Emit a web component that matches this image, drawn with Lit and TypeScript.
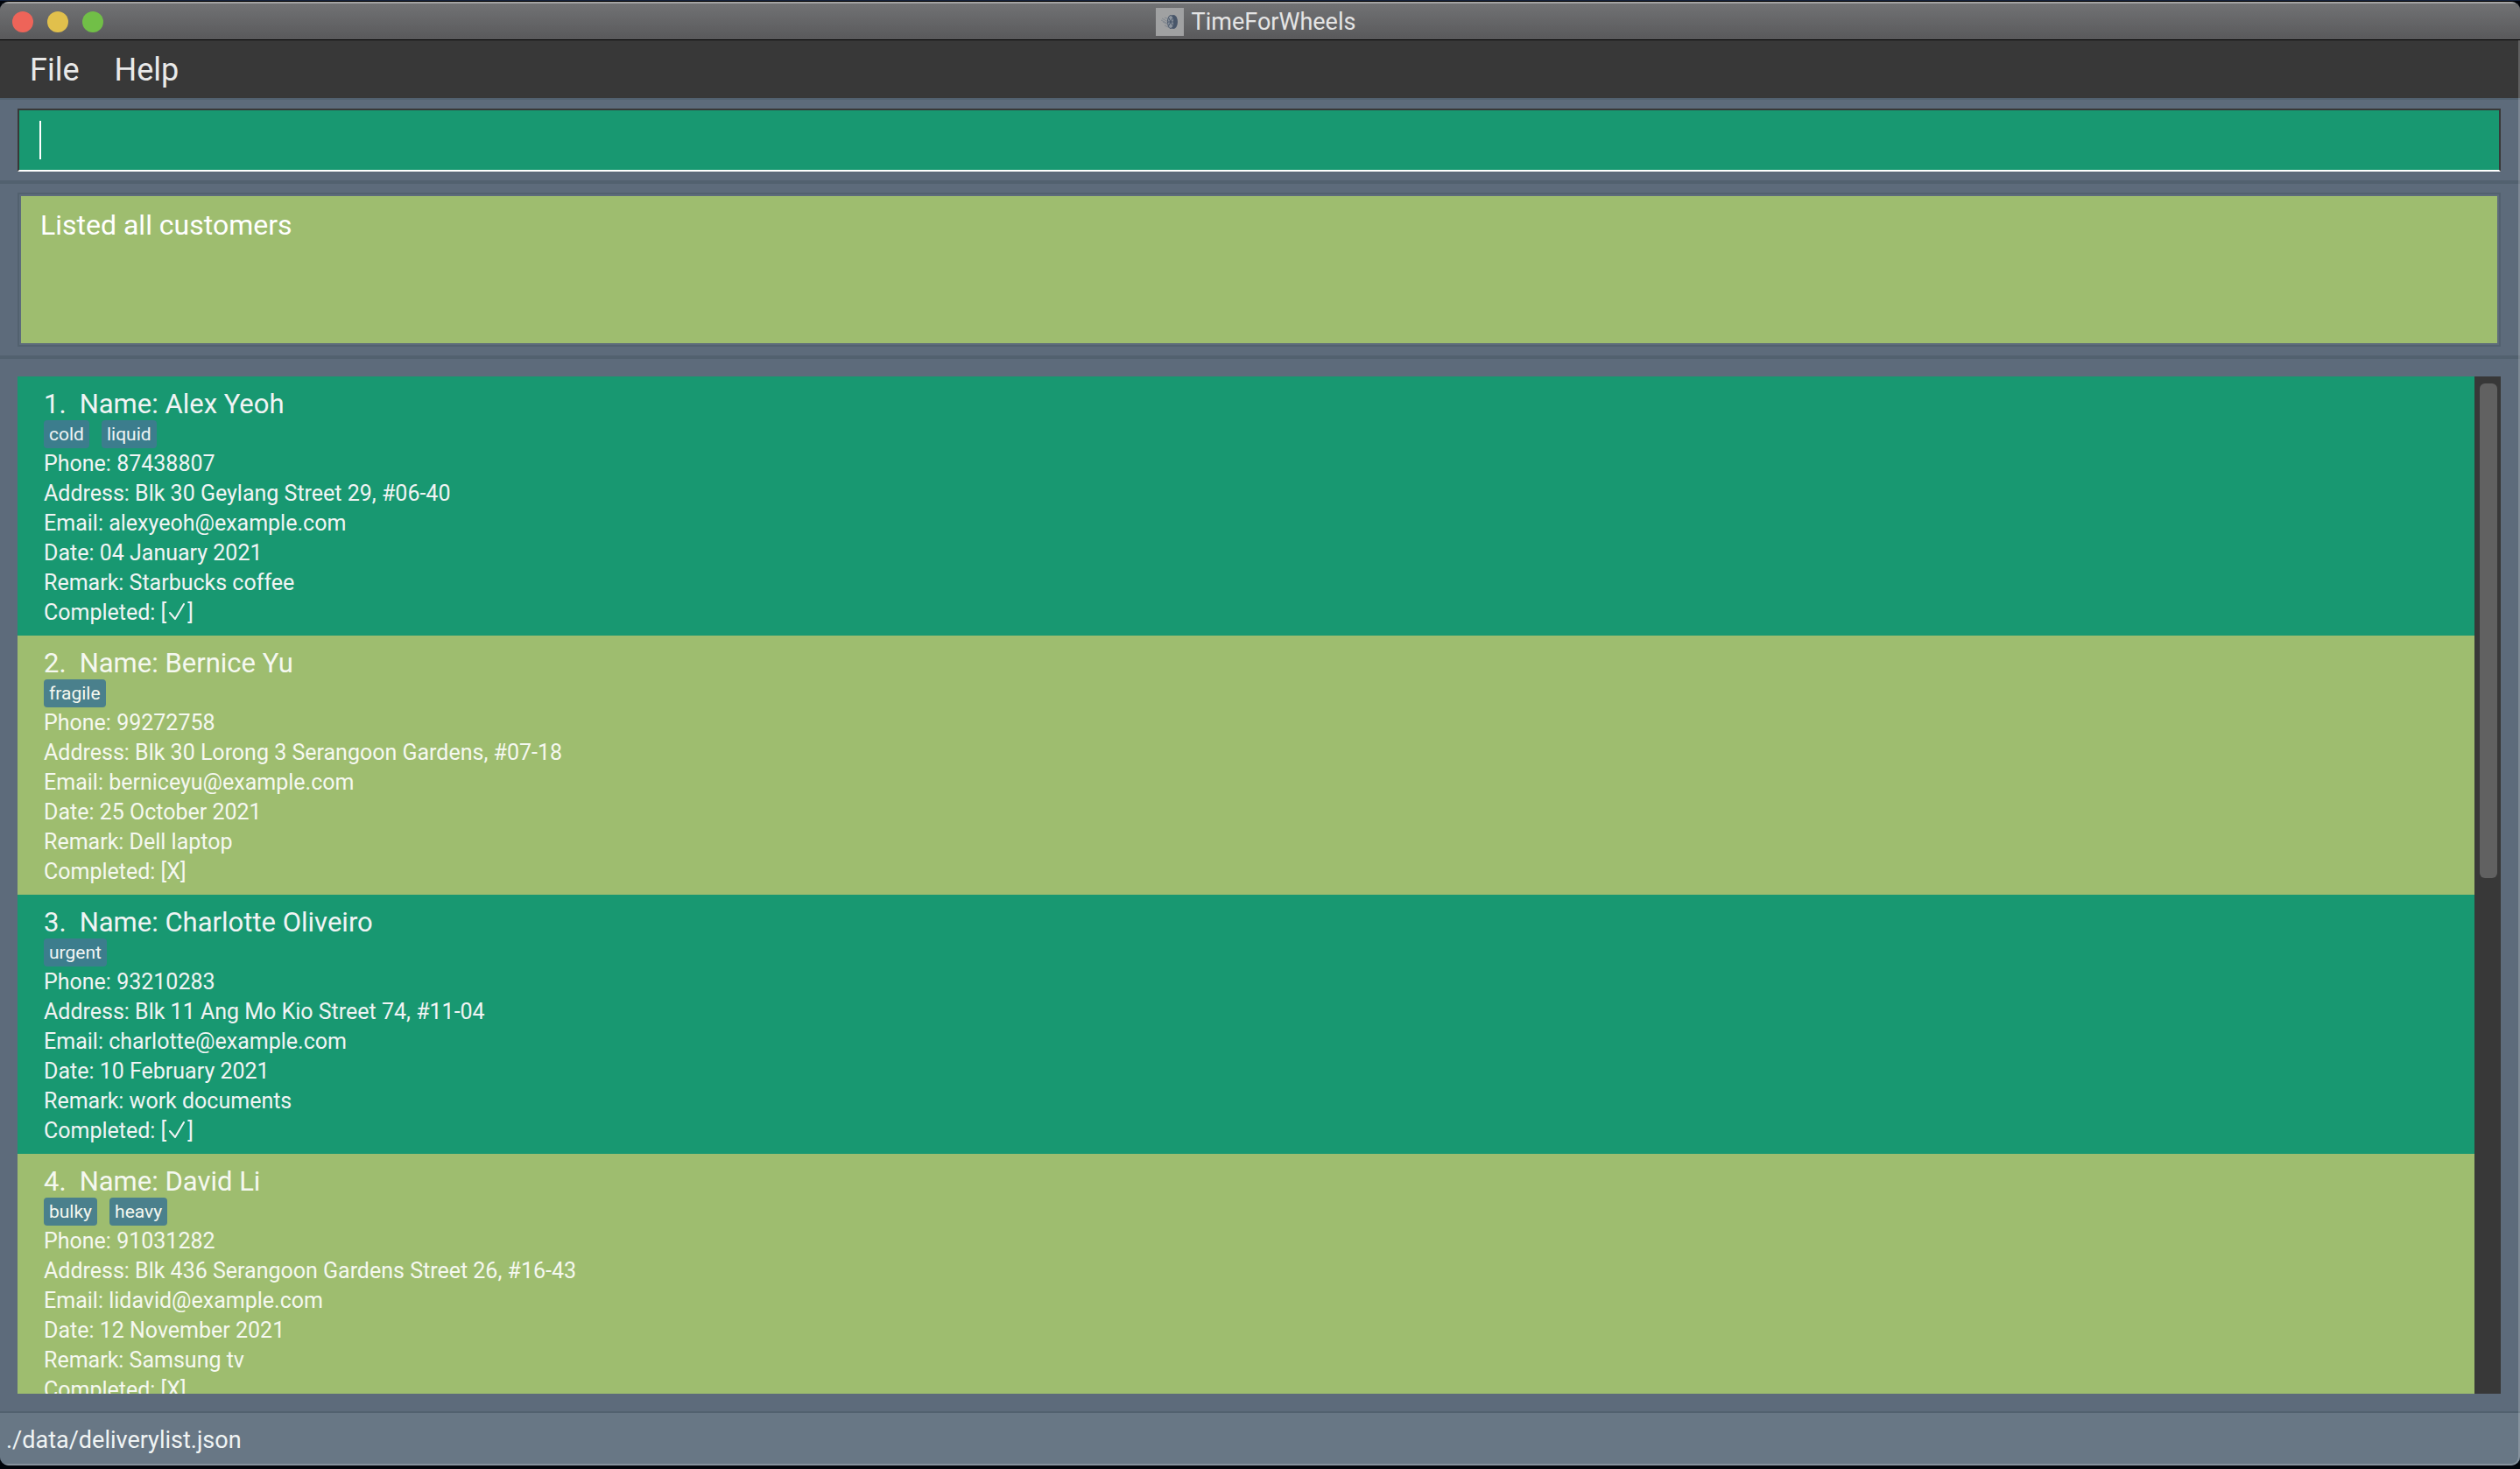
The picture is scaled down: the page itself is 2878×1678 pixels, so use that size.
import { LitElement, html, css } from "lit";
import { customElement } from "lit/decorators.js";

interface Customer {
  name: string;
  tags: string[];
  phone: string;
  address: string;
  email: string;
  date: string;
  remark: string;
  completed: boolean;
}

const customers: Customer[] = [
  { name: "Alex Yeoh", tags: ["cold", "liquid"], phone: "87438807", address: "Blk 30 Geylang Street 29, #06-40", email: "alexyeoh@example.com", date: "04 January 2021", remark: "Starbucks coffee", completed: true },
  { name: "Bernice Yu", tags: ["fragile"], phone: "99272758", address: "Blk 30 Lorong 3 Serangoon Gardens, #07-18", email: "berniceyu@example.com", date: "25 October 2021", remark: "Dell laptop", completed: false },
  { name: "Charlotte Oliveiro", tags: ["urgent"], phone: "93210283", address: "Blk 11 Ang Mo Kio Street 74, #11-04", email: "charlotte@example.com", date: "10 February 2021", remark: "work documents", completed: true },
  { name: "David Li", tags: ["bulky", "heavy"], phone: "91031282", address: "Blk 436 Serangoon Gardens Street 26, #16-43", email: "lidavid@example.com", date: "12 November 2021", remark: "Samsung tv", completed: false },
];

@customElement("customer-card")
class CustomerCard extends LitElement {
  static properties = { customer: { attribute: false }, index: { type: Number } };
  declare customer: Customer;
  declare index: number;

  static styles = css`
    :host { display: block; padding: 10px 30px 9px; }
    .name { margin: 0; height: 40px; font-size: 31px; font-weight: 400; line-height: 43px; display: flex; gap: 15px; }
    .tags { display: flex; gap: 14px; height: 32px; margin-bottom: 1px; }
    .tag { background: rgb(60, 125, 141); border-radius: 4px; padding: 0 6px; font-size: 21px; line-height: 32px; }
    :host(.alt) .tag { background: rgb(74, 128, 140); }
    .line { margin: 0; font-size: 25px; line-height: 34px; }
    .tick { width: 20px; height: 20px; margin: 0 2px; vertical-align: -1px; }
  `;

  render() {
    const c = this.customer;
    return html`
      <h2 class="name"><span>${this.index}.</span><span>Name: ${c.name}</span></h2>
      <div class="tags">${c.tags.map((t) => html`<span class="tag">${t}</span>`)}</div>
      <p class="line">Phone: ${c.phone}</p>
      <p class="line">Address: ${c.address}</p>
      <p class="line">Email: ${c.email}</p>
      <p class="line">Date: ${c.date}</p>
      <p class="line">Remark: ${c.remark}</p>
      <p class="line">Completed: [${c.completed
        ? html`<svg class="tick" viewBox="0 0 20 20" role="img" aria-label="yes"><path d="M2 11 L8 18 L18 1" fill="none" stroke="currentColor" stroke-width="2" stroke-linecap="round" stroke-linejoin="round" /></svg>`
        : "X"}]</p>
    `;
  }
}

@customElement("app-root")
export class AppRoot extends LitElement {
  static styles = css`
    * { box-sizing: border-box; }
    :host { display: block; background: #02050c; color: #f0f4f4; font-family: Roboto, "Liberation Sans", sans-serif; }
    .screen { height: 100vh; display: flex; flex-direction: column; padding: 1px 0 4px; background: linear-gradient(#14223c 0 1px, #02050c 1px); }
    .window { flex: 1; min-height: 0; display: flex; flex-direction: column; overflow: hidden; background: #5d6b7b; border-radius: 10px; border-top: 1px solid #000; position: relative; }
    .window::after { content: ""; position: absolute; inset: 44px 0 0; border: solid rgba(255, 255, 255, 0.2); border-width: 0 2px 2px 0; border-radius: 0 0 10px 0; pointer-events: none; }
    .titlebar { flex: none; height: 44px; border-top: 2px solid #a4a4a4; border-bottom: 1px solid #000; background: linear-gradient(#717274, #59595b); display: grid; grid-template-columns: 1fr auto 1fr; align-items: center; }
    .lights { display: flex; gap: 16px; padding-left: 14px; }
    .light { appearance: none; border: 0; padding: 0; width: 24px; height: 24px; border-radius: 50%; }
    .close { background: #ee6459; }
    .minimise { background: #e1c04c; }
    .zoom { background: #71bf47; }
    .title { display: flex; align-items: center; gap: 9px; margin: 0; font-size: 27px; font-weight: 400; line-height: 30px; color: #e4e4e4; padding-right: 10px; }
    .logo { width: 32px; height: 32px; display: block; }
    .menubar { flex: none; height: 66px; background: #383838; display: flex; align-items: center; gap: 40px; padding: 2px 34px 0; }
    .menu { appearance: none; background: none; border: 0; padding: 0; font: inherit; font-size: 36px; line-height: 44px; color: #e9e9e9; }
    .command { flex: none; padding: 10px 22px 10px 20px; border-top: 2px solid #52616f; }
    .field { display: block; width: 100%; height: 72px; background: #189871; border: 2px solid #383838; border-bottom-color: #fff; border-radius: 0; outline: 0; padding: 0 23px; font: inherit; font-size: 32px; color: #fff; caret-color: transparent; background-image: linear-gradient(#fff, #fff); background-size: 2px 44px; background-repeat: no-repeat; background-position: 23px 12px; }
    .result { flex: none; border-top: 4px solid #52616f; border-bottom: 4px solid #52616f; padding: 10px 22px 10px 20px; }
    .frame { border: 2px solid #52616f; padding: 2px; }
    .message { display: block; width: 100%; height: 168px; margin: 0; border: 0; outline: 0; resize: none; padding: 11px 22px; background: #9ebd6f; color: #fff; font: inherit; font-size: 32px; line-height: 44px; }
    .listwrap { flex: 1; min-height: 0; margin: 20px 22px 20px 20px; display: flex; }
    .list { flex: 1; overflow: hidden; list-style: none; margin: 0; padding: 0; }
    .row { background: #189871; }
    .row:nth-child(even) { background: #9ebd6f; color: #f5f8f0; }
    .track { flex: none; width: 30px; background: #383838; padding: 8px 4px 0 6px; }
    .thumb { height: 49%; background: #616161; border-radius: 6px; }
    .status { flex: none; height: 62px; border-top: 2px solid #52616f; background: #687785; padding: 2px 7px 0; display: flex; align-items: center; font-size: 27px; line-height: 36px; }
  `;

  render() {
    return html`
      <div class="screen">
        <main class="window">
          <header class="titlebar">
            <div class="lights">
              <button class="light close" aria-label="Close"></button>
              <button class="light minimise" aria-label="Minimise"></button>
              <button class="light zoom" aria-label="Zoom"></button>
            </div>
            <h1 class="title">
              <svg class="logo" viewBox="0 0 32 32" aria-hidden="true">
                <rect width="32" height="32" fill="#a0a1a2" />
                <ellipse cx="20" cy="16" rx="5" ry="8" fill="#48566a" />
                <ellipse cx="17" cy="16" rx="3.500" ry="7.500" fill="#8c949e" stroke="#48566a" />
                <path d="M15 12l4 8M19 12l-4 8M14 16h6" stroke="#48566a" fill="none" />
                <path d="M7 12l7 4M8 16l6 3M10 20l6 3M10 11l5 2M6 14l8 4" stroke="#727b87" stroke-width="0.700" fill="none" />
              </svg>
              <span>TimeForWheels</span>
            </h1>
          </header>
          <nav class="menubar">
            <button class="menu">File</button>
            <button class="menu">Help</button>
          </nav>
          <div class="command"><input class="field" type="text" aria-label="Command" /></div>
          <div class="result"><div class="frame"><textarea class="message" readonly aria-label="Result" .value=${"Listed all customers"}></textarea></div></div>
          <div class="listwrap">
            <ul class="list">
              ${customers.map((c, i) => html`<li class="row"><customer-card class=${i % 2 ? "alt" : ""} .customer=${c} .index=${i + 1}></customer-card></li>`)}
            </ul>
            <div class="track"><div class="thumb"></div></div>
          </div>
          <footer class="status">./data/deliverylist.json</footer>
        </main>
      </div>
    `;
  }
}
